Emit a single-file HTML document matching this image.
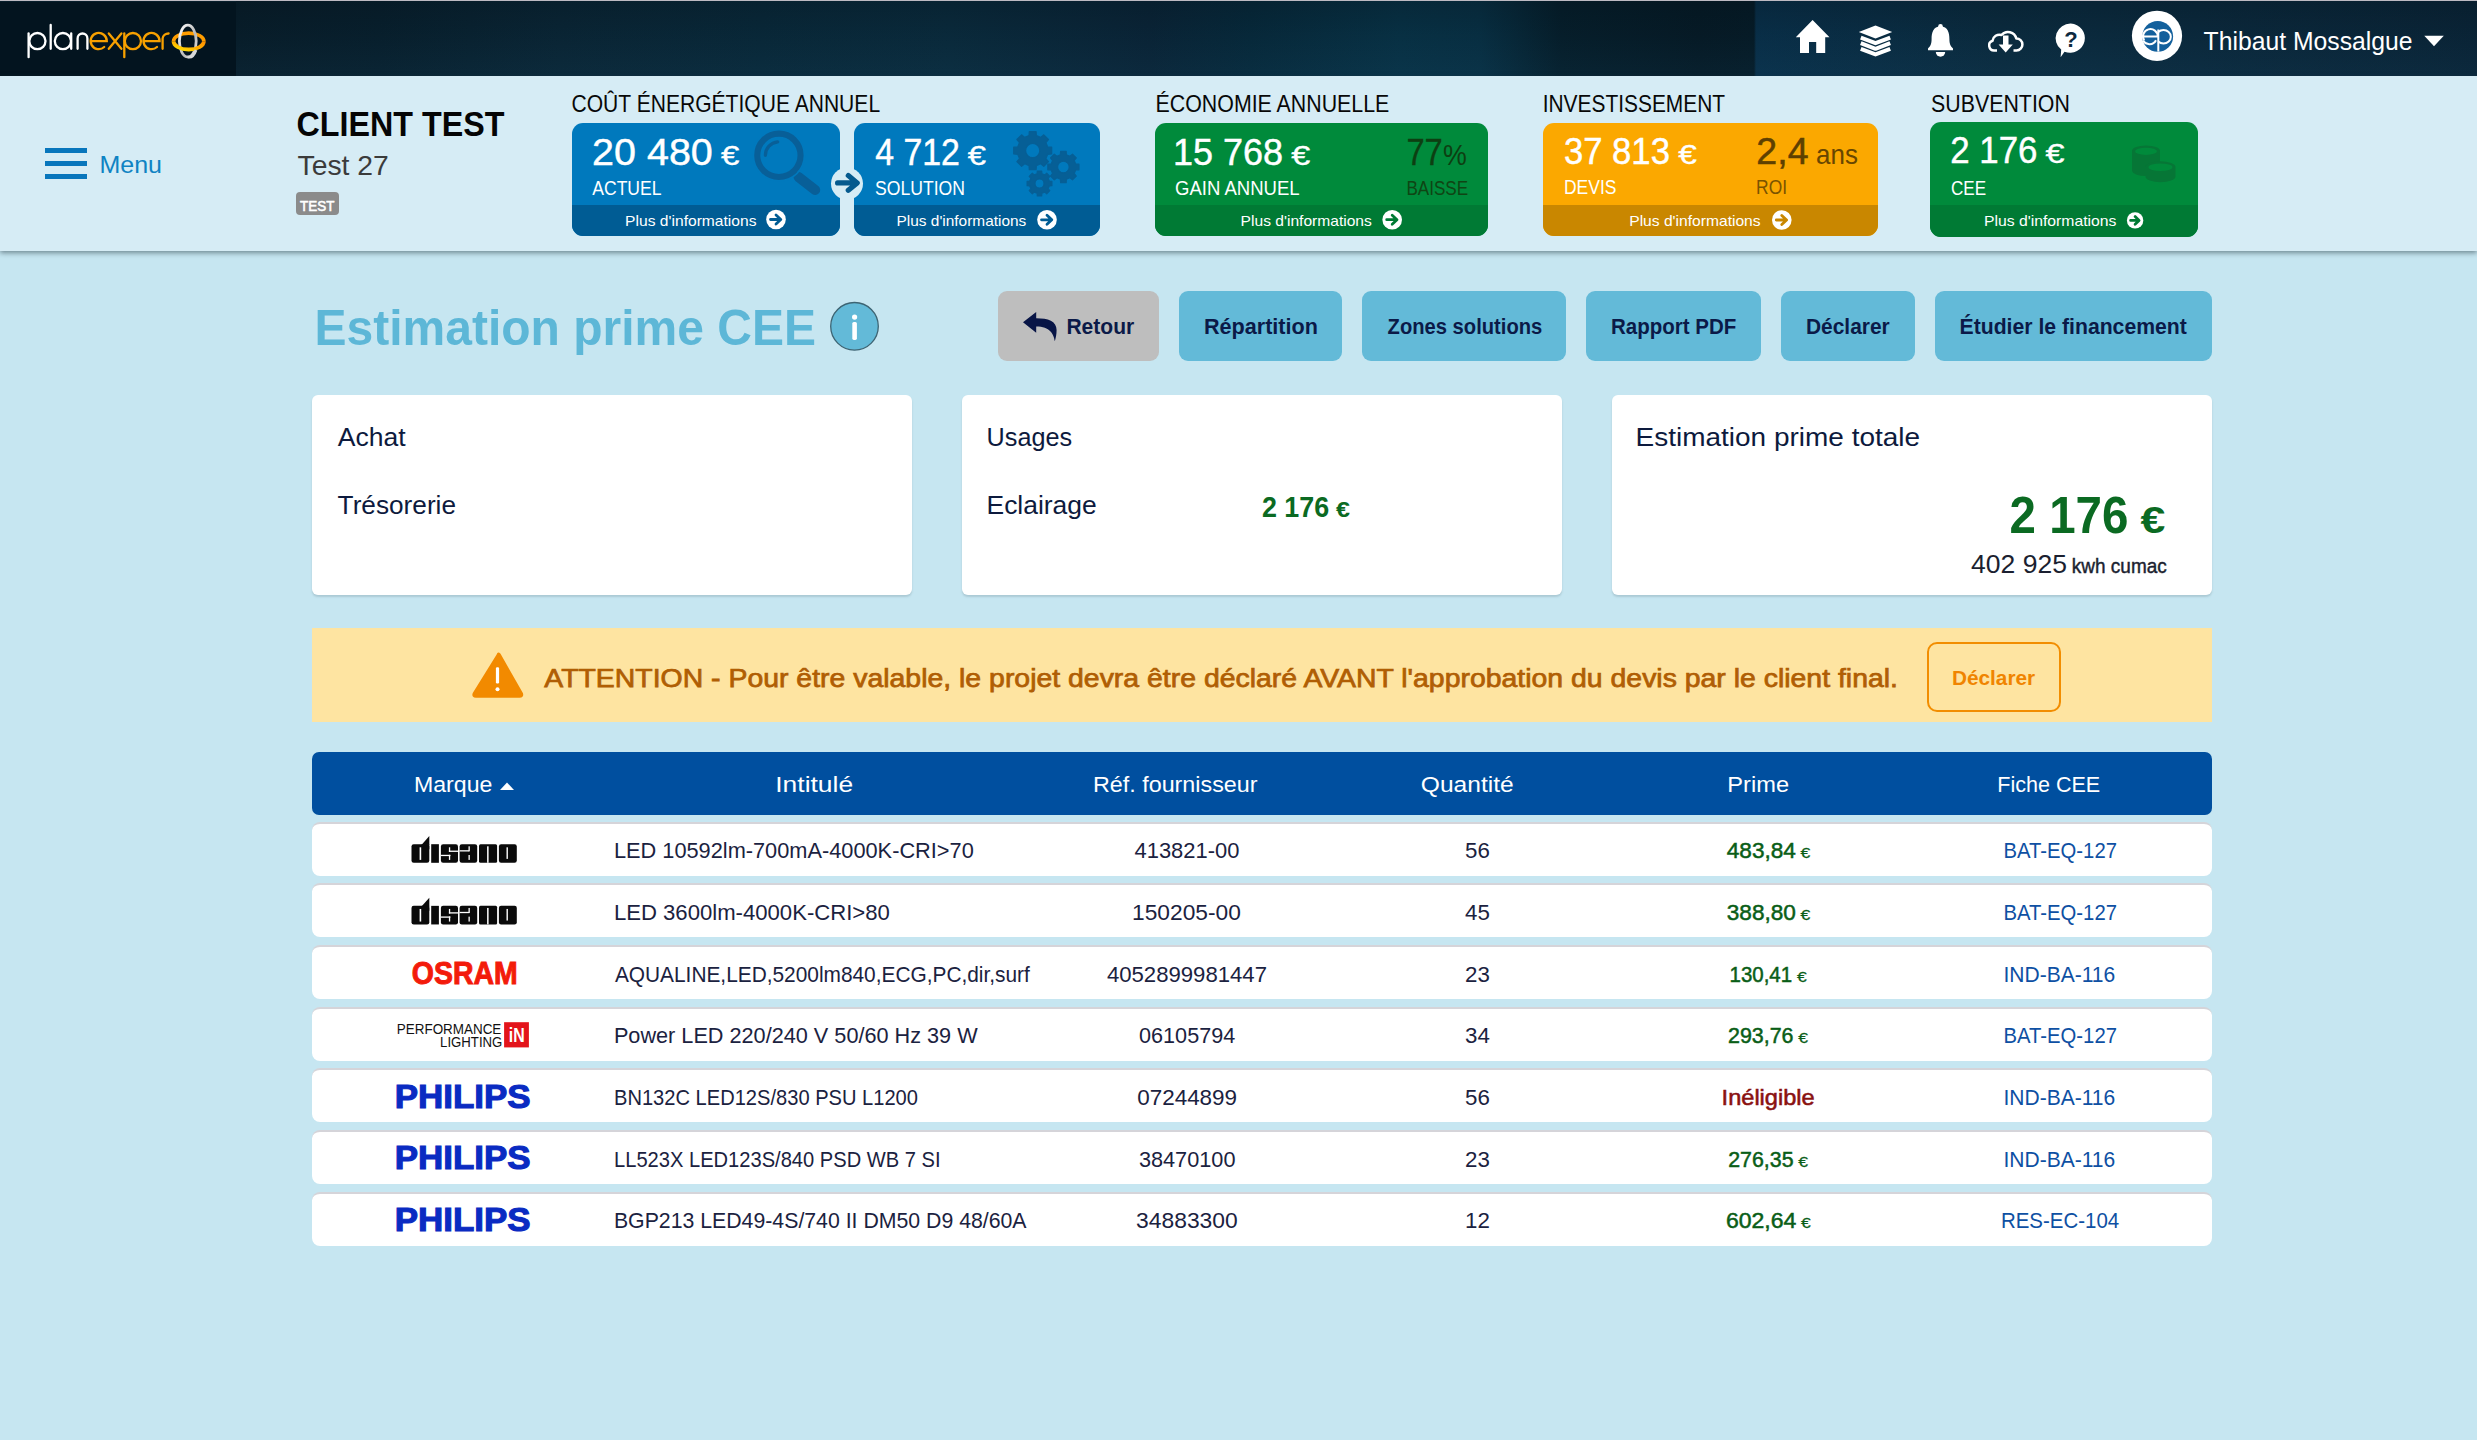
<!DOCTYPE html>
<html lang="fr">
<head>
<meta charset="utf-8">
<title>Estimation prime CEE</title>
<style>
*{box-sizing:border-box;margin:0;padding:0}
html,body{width:2477px;height:1440px;overflow:hidden}
body{background:#c6e6f1;font-family:"Liberation Sans",sans-serif;position:relative;color:#0d1a3d}
.abs{position:absolute}
.t{position:absolute;white-space:nowrap;line-height:1}
/* navbar */
#nav{position:absolute;left:0;top:0;width:2477px;height:76px;border-top:1px solid #bdbac2;
 background:linear-gradient(90deg,#081e2b 236px,#08202e 380px,#0a2636 560px,#09293a 760px,#0a2b3d 950px,#0a2538 1150px,#072a3c 1250px,#083246 1400px,#083044 1480px,#061f2c 1560px,#061b27 1700px,#061c28 1754px,#09304a 1756px,#0b2c40 2000px,#0b2a3e 2200px,#0a2538 2477px)}
#logo{position:absolute;left:0;top:1px;width:236px;height:75px;background:#03141f}
#hdr{position:absolute;left:0;top:76px;width:2477px;height:175px;background:#d6ecf5;box-shadow:0 2px 5px rgba(40,60,70,.55)}
.lbl{font-size:22px;color:#0a0a0a;letter-spacing:-0.4px}
.card{position:absolute;top:123px;height:113px;border-radius:11px;overflow:hidden}
.card .strip{position:absolute;left:0;right:0;bottom:0;height:31px}
.big{font-size:37px;color:#fff;letter-spacing:-0.5px}
.big small{font-size:27px}
.sub{font-size:18.5px;color:#fff;letter-spacing:-0.3px}
.more{font-size:15px;color:#fff;letter-spacing:-0.2px}
.btn{position:absolute;top:291px;height:70px;border-radius:9px;background:#63bad8;font-weight:bold;font-size:21px;color:#0b1a48;text-align:center;line-height:70px;letter-spacing:-0.2px}
.box{position:absolute;top:395px;width:600px;height:200px;background:#fff;border-radius:6px;box-shadow:0 2px 2px rgba(120,150,160,.35)}
.row{position:absolute;left:312px;width:1900px;height:54px;background:#fff;border-radius:7px;border-top:2px solid #d3d6d8}
.cell{position:absolute;top:15px;font-size:22px;color:#1b2240;white-space:nowrap;line-height:1;letter-spacing:-0.2px}
.c{transform:translateX(-50%)}
.prime{font-weight:bold;color:#0c6a23}
.prime small{font-size:15px}
.fiche{color:#1f5c9e}
</style>
</head>
<body>
<div id="nav">
  <div class="abs" style="left:236px;top:0;width:2241px;height:75px;background:linear-gradient(180deg,rgba(0,8,14,.22) 0%,rgba(0,8,14,.06) 45%,rgba(30,80,110,.10) 100%)"></div>
  <div id="logo"></div>
  <svg class="abs" style="left:0;top:-1px" width="2477" height="77" viewBox="0 0 2477 77">
    <defs>
      <linearGradient id="og" x1="0" y1="1" x2="1" y2="0">
        <stop offset="0" stop-color="#ffe600"/><stop offset=".45" stop-color="#ffb000"/><stop offset="1" stop-color="#ff9000"/>
      </linearGradient>
      <linearGradient id="sg" x1="0" y1="0" x2="1" y2="1">
        <stop offset="0" stop-color="#ffffff"/><stop offset=".6" stop-color="#b8b8b8"/><stop offset="1" stop-color="#e8e8e8"/>
      </linearGradient>
    </defs>
    <!-- logo text -->
    <g fill="none" stroke="#ffffff" stroke-width="2.3" stroke-linecap="round">
      <path d="M28.6,33.5 V57.2"/><circle cx="37.4" cy="41.1" r="8.1"/>
      <path d="M50.7,25 V48.8"/>
      <circle cx="62.9" cy="41.1" r="8.1"/><path d="M71.2,33.5 V48.8"/>
      <path d="M77.6,48.8 V38.4 A4.9,4.9 0 0 1 87.4,38.4 V48.8"/>
    </g>
    <g fill="none" stroke="#f7a000" stroke-width="2.3" stroke-linecap="round">
      <path d="M90.6,41.2 H106.8 A8.1,8.1 0 1 0 104.2,47"/>
      <path d="M108.8,33.5 L121.4,48.8 M121.4,33.5 L108.8,48.8"/>
      <path d="M124.3,33.5 V57.2"/><circle cx="132.9" cy="41.1" r="8.1"/>
      <path d="M143.4,41.2 H159.6 A8.1,8.1 0 1 0 157,47"/>
      <path d="M162.6,48.8 V38.5 A6,5.5 0 0 1 168.6,33.5"/>
    </g>
    <path d="M173.5,41.3 A15.2,8.2 0 0 1 203.9,41.3" fill="none" stroke="#ff9d00" stroke-width="3.6"/>
    <ellipse cx="187.8" cy="41.05" rx="8.4" ry="15.9" fill="none" stroke="url(#sg)" stroke-width="2.8"/>
    <path d="M203.9,41.3 A15.2,8.2 0 0 1 173.5,41.3" fill="none" stroke="url(#og)" stroke-width="3.8"/>
    <path d="M196,50 A8.4,15.9 0 0 1 187.8,57" fill="none" stroke="#d8d8d8" stroke-width="2.8"/>
    <!-- home -->
    <path d="M1812.6,20 L1829.5,37.2 L1825.2,37.2 L1825.2,53 L1816.2,53 L1816.2,42 L1809,42 L1809,53 L1800,53 L1800,37.2 L1795.8,37.2 Z" fill="#fff"/>
    <!-- layers -->
    <g fill="#fff">
      <path d="M1858.8,32 L1875.5,25.5 L1892.2,32 L1875.5,38.5 Z"/>
    </g>
    <g fill="none" stroke="#fff" stroke-width="4" stroke-linejoin="round">
      <path d="M1860.8,37.6 L1875.5,43.2 L1890.2,37.6"/>
      <path d="M1860.8,43.2 L1875.5,48.8 L1890.2,43.2"/>
      <path d="M1860.8,48.8 L1875.5,54.4 L1890.2,48.8"/>
    </g>
    <!-- bell -->
    <g fill="#fff">
      <circle cx="1940.5" cy="26.2" r="2.3"/>
      <path d="M1940.5,26.5 C1933,26.5 1931.6,33 1931.6,39 C1931.6,44 1930.5,46 1928,48.5 L1928,50.3 L1953,50.3 L1953,48.5 C1950.5,46 1949.4,44 1949.4,39 C1949.4,33 1948,26.5 1940.5,26.5 Z"/>
      <path d="M1935.8,52 A4.7,4.7 0 0 0 1945.2,52 Z"/>
    </g>
    <!-- cloud download -->
    <path d="M1997,50.5 H1994.5 A5,5 0 0 1 1992.5,40.8 A7,7 0 0 1 2001.5,35 A8.5,8.5 0 0 1 2016.3,38.5 A6,6 0 0 1 2016.5,50.5 H2013.5" fill="none" stroke="#fff" stroke-width="2.5" stroke-linejoin="round"/>
    <path d="M2003,35.5 H2008.5 V44.5 H2012.8 L2005.7,52.6 L1998.6,44.5 H2003 Z" fill="#fff"/>
    <!-- question -->
    <path d="M2070.8,23.6 A14.8,14.6 0 1 1 2064.5,51.7 L2060.6,57.2 L2061.2,49.6 A14.8,14.6 0 0 1 2070.8,23.6 Z" fill="#fff"/>
    <text x="2071" y="46.8" text-anchor="middle" font-family="Liberation Sans" font-weight="bold" font-size="22" fill="#0c2a40">?</text>
    <!-- avatar -->
    <circle cx="2157" cy="35.8" r="25.1" fill="#fff"/>
    <circle cx="2157.7" cy="36.4" r="15.4" fill="#13609c"/>
    <g fill="none" stroke="#fff" stroke-width="2">
      <path d="M2142.5,36.6 H2157.8 A7.4,7.4 0 1 0 2144.2,40.5"/>
      <path d="M2143.2,40.8 A7.4,7.4 0 0 0 2156,40.2"/>
      <path d="M2158.3,29.5 V51.6"/>
      <path d="M2158.3,32 A7.3,6.8 0 1 1 2158.3,41.5"/>
    </g>
    <path d="M2424.3,35.8 L2443.8,35.8 L2434,46.2 Z" fill="#fff"/>
  </svg>
  </div>
<div id="hdr"></div>
<!-- menu -->
<div class="abs" style="left:45px;top:148px;width:42px;height:5px;background:#0876bc"></div>
<div class="abs" style="left:45px;top:161px;width:42px;height:5px;background:#0876bc"></div>
<div class="abs" style="left:45px;top:174px;width:42px;height:5px;background:#0876bc"></div>
<div class="abs" style="left:296px;top:192px;width:43px;height:23px;background:#8b8b8b;border-radius:4px"></div>

<!-- KPI labels -->

<!-- card 1 -->
<div class="card" style="left:572px;width:268px;background:#0079bd">
  <div class="strip" style="background:#005c94"></div>
  <svg class="abs" style="left:0;top:0" width="268" height="113">
    <path d="M226.5,54 L243.2,67" stroke="#085f98" stroke-width="10" stroke-linecap="round"/>
    <circle cx="206.9" cy="32.3" r="25.6" fill="none" stroke="#0079bd" stroke-width="1.6"/>
    <circle cx="206.9" cy="32.3" r="21.65" fill="none" stroke="#085f98" stroke-width="6.1"/>
    <path d="M193.4,32.3 A13.5,13.5 0 0 1 205.7,18.85" fill="none" stroke="#085f98" stroke-width="3.3" stroke-linecap="round"/>
  </svg>
</div>

<!-- card 2 -->
<div class="card" style="left:854px;width:246px;background:#0079bd">
  <div class="strip" style="background:#005c94"></div>
  <svg class="abs" style="left:0;top:0" width="246" height="113" id="gears"><path fill-rule="evenodd" d="M193.7,23.9 L197.7,24.2 L197.7,31.0 L193.7,31.3 L191.9,35.6 L194.5,38.7 L189.8,43.4 L186.7,40.8 L182.4,42.6 L182.1,46.6 L175.3,46.6 L175.0,42.6 L170.7,40.8 L167.6,43.4 L162.9,38.7 L165.5,35.6 L163.7,31.3 L159.7,31.0 L159.7,24.2 L163.7,23.9 L165.5,19.6 L162.9,16.5 L167.6,11.8 L170.7,14.4 L175.0,12.6 L175.3,8.6 L182.1,8.6 L182.4,12.6 L186.7,14.4 L189.8,11.8 L194.5,16.5 L191.9,19.6 Z M185.8,27.6 A7.1,7.1 0 1 0 171.6,27.6 A7.1,7.1 0 1 0 185.8,27.6 Z" fill="#065f96" stroke="#065f96" stroke-width="1.2" stroke-linejoin="round"/><path fill-rule="evenodd" d="M221.7,41.0 L225.0,41.2 L225.0,46.8 L221.7,47.0 L220.2,50.5 L222.3,53.1 L218.5,56.9 L215.9,54.8 L212.4,56.3 L212.2,59.6 L206.6,59.6 L206.4,56.3 L202.9,54.8 L200.3,56.9 L196.5,53.1 L198.6,50.5 L197.1,47.0 L193.8,46.8 L193.8,41.2 L197.1,41.0 L198.6,37.5 L196.5,34.9 L200.3,31.1 L202.9,33.2 L206.4,31.7 L206.6,28.4 L212.2,28.4 L212.4,31.7 L215.9,33.2 L218.5,31.1 L222.3,34.9 L220.2,37.5 Z M215.2,44.0 A5.8,5.8 0 1 0 203.6,44.0 A5.8,5.8 0 1 0 215.2,44.0 Z" fill="#065f96" stroke="#065f96" stroke-width="1.2" stroke-linejoin="round"/><path fill-rule="evenodd" d="M195.3,58.1 L197.9,58.3 L197.9,62.7 L195.3,62.9 L194.1,65.7 L195.8,67.7 L192.7,70.8 L190.7,69.1 L187.9,70.3 L187.7,72.9 L183.3,72.9 L183.1,70.3 L180.3,69.1 L178.3,70.8 L175.2,67.7 L176.9,65.7 L175.7,62.9 L173.1,62.7 L173.1,58.3 L175.7,58.1 L176.9,55.3 L175.2,53.3 L178.3,50.2 L180.3,51.9 L183.1,50.7 L183.3,48.1 L187.7,48.1 L187.9,50.7 L190.7,51.9 L192.7,50.2 L195.8,53.3 L194.1,55.3 Z M190.0,60.5 A4.5,4.5 0 1 0 181.0,60.5 A4.5,4.5 0 1 0 190.0,60.5 Z" fill="#065f96" stroke="#065f96" stroke-width="1.2" stroke-linejoin="round"/></svg>
</div>
<!-- arrow circle -->
<svg class="abs" style="left:828px;top:166px" width="38" height="38">
  <circle cx="19" cy="17.6" r="16" fill="#d6ecf5"/>
  <path d="M9.6,16.9 H27.5 M20.3,9.6 L29.2,16.9 L20.3,24.3" fill="none" stroke="#055a8e" stroke-width="5.2" stroke-linecap="round" stroke-linejoin="round"/>
</svg>

<!-- card 3 -->
<div class="card" style="left:1155px;width:333px;background:#008a3b">
  <div class="strip" style="background:#007a34"></div>
</div>

<!-- card 4 -->
<div class="card" style="left:1543px;width:335px;background:#fba800">
  <div class="strip" style="background:#c98700"></div>
</div>

<!-- card 5 -->
<div class="card" style="left:1930px;top:122px;height:115px;width:268px;background:#008a3b">
  <div class="strip" style="background:#007a34;height:32px"></div>
  <svg class="abs" style="left:0;top:0" width="268" height="115" id="coins"><g fill="#067636">
<path d="M202,29 A14,5.5 0 0 1 230,29 V48.5 A14,5.5 0 0 1 202,48.5 Z"/>
<path d="M215.5,45 A15,5.8 0 0 1 245.5,45 V54.4 A15,5.8 0 0 1 215.5,54.4 Z"/>
</g>
<ellipse cx="216" cy="29.3" rx="11" ry="3.6" fill="#008a3b"/>
<ellipse cx="230.5" cy="45.2" rx="12" ry="3.8" fill="#008a3b"/>
<path d="M215.5,45 A15,5.8 0 0 0 230,51" fill="none" stroke="#077a36" stroke-width="0"/>
</svg>
</div>

<!-- more icons -->
<svg class="abs" style="left:0;top:200px" width="2477" height="40" viewBox="0 200 2477 40">
  <g id="moreicons"><circle cx="776" cy="219.5" r="9.8" fill="#fff"/><path d="M770.5,219.5 H780 M776,215.0 L780.8,219.5 L776,224.0" fill="none" stroke="#005c94" stroke-width="2.8" stroke-linecap="round" stroke-linejoin="round"/><circle cx="1047" cy="219.8" r="9.8" fill="#fff"/><path d="M1041.5,219.8 H1051 M1047,215.3 L1051.8,219.8 L1047,224.3" fill="none" stroke="#005c94" stroke-width="2.8" stroke-linecap="round" stroke-linejoin="round"/><circle cx="1392.2" cy="219.7" r="9.8" fill="#fff"/><path d="M1386.7,219.7 H1396.2 M1392.2,215.2 L1397.0,219.7 L1392.2,224.2" fill="none" stroke="#007a34" stroke-width="2.8" stroke-linecap="round" stroke-linejoin="round"/><circle cx="1781.8" cy="220" r="9.8" fill="#fff"/><path d="M1776.3,220 H1785.8 M1781.8,215.5 L1786.6,220 L1781.8,224.5" fill="none" stroke="#c98700" stroke-width="2.8" stroke-linecap="round" stroke-linejoin="round"/><circle cx="2135.1" cy="220.4" r="8.2" fill="#fff"/><path d="M2130.6,220.4 H2138.6 M2135.1,216.6 L2139.1,220.4 L2135.1,224.2" fill="none" stroke="#007a34" stroke-width="2.8" stroke-linecap="round" stroke-linejoin="round"/></g>
</svg>

<!-- title -->
<svg class="abs" style="left:828px;top:300px" width="54" height="54">
  <circle cx="26.5" cy="26.3" r="23.8" fill="#63bad8" stroke="#3d6473" stroke-width="1.3"/>
  <circle cx="26.6" cy="17.1" r="2.6" fill="#fff"/>
  <rect x="24.3" y="22" width="4.6" height="17.9" rx="1.6" fill="#fff"/>
</svg>

<!-- buttons -->
<div class="btn" style="left:998px;width:161px;background:#bebebe"></div>
<svg class="abs" style="left:1020px;top:309px" width="40" height="36">
  <path d="M3,13.2 L16.2,3 V9.2 C28,9.2 36.6,12 36.6,21 C36.6,25.5 35.8,29 34.8,32.2 C33.8,25 30,17.4 16.2,17.4 V23.8 Z" fill="#081546"/>
</svg>
<div class="btn" style="left:1179px;width:163px"></div>
<div class="btn" style="left:1362px;width:204px"></div>
<div class="btn" style="left:1586px;width:175px"></div>
<div class="btn" style="left:1781px;width:134px"></div>
<div class="btn" style="left:1935px;width:277px"></div>

<!-- boxes -->
<div class="box" style="left:312px"></div>
<div class="box" style="left:962px"></div>
<div class="box" style="left:1612px"></div>

<!-- alert -->
<div class="abs" style="left:312px;top:628px;width:1900px;height:94px;background:#fee4a1"></div>
<svg class="abs" style="left:468px;top:648px" width="60" height="54">
  <path d="M29.8,6.5 Q30,4.5 31.8,6.5 L54,45.5 Q55,48.7 51.5,48.7 L8,48.7 Q4.5,48.7 5.6,45.5 Z" fill="#f28a00" stroke="#f28a00" stroke-width="2" stroke-linejoin="round"/>
  <rect x="27.9" y="19.2" width="3.2" height="16.3" rx="1.2" fill="#fff"/>
  <circle cx="29.5" cy="41.2" r="2" fill="#fff"/>
</svg>
<div class="abs" style="left:1927px;top:642px;width:134px;height:70px;border:2px solid #f28d00;border-radius:10px"></div>

<!-- table header -->
<div class="abs" style="left:312px;top:752px;width:1900px;height:63px;background:#004f9f;border-radius:7px"></div>
<svg class="abs" style="left:498px;top:780px" width="18" height="12"><path d="M2,10 L9,2.5 L16,10 Z" fill="#fff"/></svg>

<div class="abs" style="left:312px;top:821.80px;width:1900px;height:54px;background:#fff;border-radius:8px;border-top:2px solid #d5d4d9"></div>
<div class="abs" style="left:312px;top:883.45px;width:1900px;height:54px;background:#fff;border-radius:8px;border-top:2px solid #d5d4d9"></div>
<div class="abs" style="left:312px;top:945.10px;width:1900px;height:54px;background:#fff;border-radius:8px;border-top:2px solid #d5d4d9"></div>
<div class="abs" style="left:312px;top:1006.75px;width:1900px;height:54px;background:#fff;border-radius:8px;border-top:2px solid #d5d4d9"></div>
<div class="abs" style="left:312px;top:1068.40px;width:1900px;height:54px;background:#fff;border-radius:8px;border-top:2px solid #d5d4d9"></div>
<div class="abs" style="left:312px;top:1130.05px;width:1900px;height:54px;background:#fff;border-radius:8px;border-top:2px solid #d5d4d9"></div>
<div class="abs" style="left:312px;top:1191.70px;width:1900px;height:54px;background:#fff;border-radius:8px;border-top:2px solid #d5d4d9"></div>
<svg class="abs" style="left:0;top:0" width="2477" height="1440"><rect x="411.50" y="844.20" width="17.80" height="18.60" rx="2.2" fill="#0a0a0a"/><rect x="421.70" y="844.20" width="7.60" height="5.00" rx="0" fill="#0a0a0a"/><path d="M421.70,844.70 L429.30,836.00 L429.30,844.70 Z" fill="#0a0a0a"/><rect x="431.20" y="844.20" width="7.70" height="18.60" rx="0" fill="#0a0a0a"/><rect x="440.90" y="844.20" width="17.10" height="18.60" rx="2.2" fill="#0a0a0a"/><rect x="459.60" y="844.20" width="17.60" height="18.60" rx="2.2" fill="#0a0a0a"/><rect x="479.00" y="844.20" width="18.10" height="18.60" rx="1.5" fill="#0a0a0a"/><rect x="498.90" y="844.20" width="17.90" height="18.60" rx="2.2" fill="#0a0a0a"/><rect x="419.60" y="847.30" width="1.60" height="12.60" rx="0" fill="#ffffff"/><rect x="448.90" y="847.30" width="1.30" height="4.60" rx="0" fill="#ffffff"/><rect x="448.90" y="850.60" width="9.10" height="1.30" rx="0" fill="#ffffff"/><rect x="440.70" y="854.80" width="9.70" height="1.30" rx="0" fill="#ffffff"/><rect x="448.90" y="854.80" width="1.30" height="5.10" rx="0" fill="#ffffff"/><rect x="459.60" y="850.20" width="9.70" height="1.30" rx="0" fill="#ffffff"/><rect x="468.50" y="846.30" width="1.30" height="5.00" rx="0" fill="#ffffff"/><rect x="468.50" y="855.00" width="1.30" height="4.90" rx="0" fill="#ffffff"/><rect x="487.10" y="846.30" width="1.50" height="16.50" rx="0" fill="#ffffff"/><rect x="506.50" y="847.30" width="1.40" height="11.60" rx="0" fill="#ffffff"/><rect x="411.50" y="905.85" width="17.80" height="18.60" rx="2.2" fill="#0a0a0a"/><rect x="421.70" y="905.85" width="7.60" height="5.00" rx="0" fill="#0a0a0a"/><path d="M421.70,906.35 L429.30,897.65 L429.30,906.35 Z" fill="#0a0a0a"/><rect x="431.20" y="905.85" width="7.70" height="18.60" rx="0" fill="#0a0a0a"/><rect x="440.90" y="905.85" width="17.10" height="18.60" rx="2.2" fill="#0a0a0a"/><rect x="459.60" y="905.85" width="17.60" height="18.60" rx="2.2" fill="#0a0a0a"/><rect x="479.00" y="905.85" width="18.10" height="18.60" rx="1.5" fill="#0a0a0a"/><rect x="498.90" y="905.85" width="17.90" height="18.60" rx="2.2" fill="#0a0a0a"/><rect x="419.60" y="908.95" width="1.60" height="12.60" rx="0" fill="#ffffff"/><rect x="448.90" y="908.95" width="1.30" height="4.60" rx="0" fill="#ffffff"/><rect x="448.90" y="912.25" width="9.10" height="1.30" rx="0" fill="#ffffff"/><rect x="440.70" y="916.45" width="9.70" height="1.30" rx="0" fill="#ffffff"/><rect x="448.90" y="916.45" width="1.30" height="5.10" rx="0" fill="#ffffff"/><rect x="459.60" y="911.85" width="9.70" height="1.30" rx="0" fill="#ffffff"/><rect x="468.50" y="907.95" width="1.30" height="5.00" rx="0" fill="#ffffff"/><rect x="468.50" y="916.65" width="1.30" height="4.90" rx="0" fill="#ffffff"/><rect x="487.10" y="907.95" width="1.50" height="16.50" rx="0" fill="#ffffff"/><rect x="506.50" y="908.95" width="1.40" height="11.60" rx="0" fill="#ffffff"/><rect x="504.1" y="1022.2" width="24.8" height="25.2" fill="#e3141b"/></svg>
<svg class="abs" style="left:0;top:0;font-family:'Liberation Sans'" width="2477" height="1440" xml:space="preserve">
<text x="2203.60" y="50" font-size="24.9" font-weight="normal" fill="#ffffff" textLength="209.04" lengthAdjust="spacingAndGlyphs">Thibaut Mossalgue</text>
<text x="99.48" y="172.9" font-size="24.8" font-weight="normal" fill="#0f83c3" textLength="62.51" lengthAdjust="spacingAndGlyphs">Menu</text>
<text x="296.56" y="136" font-size="34.5" font-weight="bold" fill="#050505" textLength="207.90" lengthAdjust="spacingAndGlyphs">CLIENT TEST</text>
<text x="297.50" y="174.8" font-size="27.8" font-weight="normal" fill="#3b3b3b" textLength="91.27" lengthAdjust="spacingAndGlyphs">Test 27</text>
<text x="300.10" y="211.3" font-size="14.6" font-weight="normal" fill="#ffffff" textLength="34.22" lengthAdjust="spacingAndGlyphs" stroke="#ffffff" stroke-width="0.6">TEST</text>
<text x="571.51" y="112.1" font-size="23.6" font-weight="normal" fill="#080808" textLength="308.60" lengthAdjust="spacingAndGlyphs">COÛT ÉNERGÉTIQUE ANNUEL</text>
<text x="1155.60" y="112.2" font-size="23.6" font-weight="normal" fill="#080808" textLength="233.76" lengthAdjust="spacingAndGlyphs">ÉCONOMIE ANNUELLE</text>
<text x="1542.73" y="112.4" font-size="23.6" font-weight="normal" fill="#080808" textLength="182.34" lengthAdjust="spacingAndGlyphs">INVESTISSEMENT</text>
<text x="1931.10" y="112.1" font-size="23.6" font-weight="normal" fill="#080808" textLength="138.74" lengthAdjust="spacingAndGlyphs">SUBVENTION</text>
<text x="592.11" y="165" font-size="36.3" font-weight="normal" fill="#ffffff" textLength="120.68" lengthAdjust="spacingAndGlyphs" stroke="#ffffff" stroke-width="0.45">20 480</text>
<text x="721.00" y="165" font-size="27.5" font-weight="normal" fill="#ffffff" textLength="18.35" lengthAdjust="spacingAndGlyphs" stroke="#ffffff" stroke-width="0.35">€</text>
<text x="875.20" y="164.8" font-size="36.3" font-weight="normal" fill="#ffffff" textLength="84.71" lengthAdjust="spacingAndGlyphs" stroke="#ffffff" stroke-width="0.45">4 712</text>
<text x="967.80" y="164.8" font-size="27.5" font-weight="normal" fill="#ffffff" textLength="18.25" lengthAdjust="spacingAndGlyphs" stroke="#ffffff" stroke-width="0.35">€</text>
<text x="1173.02" y="164.5" font-size="36.3" font-weight="normal" fill="#ffffff" textLength="110.06" lengthAdjust="spacingAndGlyphs" stroke="#ffffff" stroke-width="0.45">15 768</text>
<text x="1291.20" y="164.5" font-size="27.5" font-weight="normal" fill="#ffffff" textLength="18.96" lengthAdjust="spacingAndGlyphs" stroke="#ffffff" stroke-width="0.35">€</text>
<text x="1406.40" y="164.5" font-size="36.3" font-weight="normal" fill="#0d3f12" textLength="36.37" lengthAdjust="spacingAndGlyphs" stroke="#0d3f12" stroke-width="0.3">77</text>
<text x="1442.97" y="164.6" font-size="28.8" font-weight="normal" fill="#0d3f12" textLength="23.79" lengthAdjust="spacingAndGlyphs">%</text>
<text x="1563.95" y="163.8" font-size="36.3" font-weight="normal" fill="#ffffff" textLength="105.99" lengthAdjust="spacingAndGlyphs" stroke="#ffffff" stroke-width="0.45">37 813</text>
<text x="1678.20" y="163.8" font-size="27.5" font-weight="normal" fill="#ffffff" textLength="18.56" lengthAdjust="spacingAndGlyphs" stroke="#ffffff" stroke-width="0.35">€</text>
<text x="1756.37" y="164.2" font-size="36.3" font-weight="normal" fill="#5e4000" textLength="52.13" lengthAdjust="spacingAndGlyphs" stroke="#5e4000" stroke-width="0.5">2,4</text>
<text x="1816.09" y="164.2" font-size="28.5" font-weight="normal" fill="#684600" textLength="41.84" lengthAdjust="spacingAndGlyphs">ans</text>
<text x="1950.24" y="163.2" font-size="36.3" font-weight="normal" fill="#ffffff" textLength="87.20" lengthAdjust="spacingAndGlyphs" stroke="#ffffff" stroke-width="0.45">2 176</text>
<text x="2045.60" y="163.2" font-size="27.5" font-weight="normal" fill="#ffffff" textLength="18.96" lengthAdjust="spacingAndGlyphs" stroke="#ffffff" stroke-width="0.35">€</text>
<text x="592.30" y="194.9" font-size="19.4" font-weight="normal" fill="#ffffff" textLength="69.20" lengthAdjust="spacingAndGlyphs">ACTUEL</text>
<text x="875.00" y="194.9" font-size="19.4" font-weight="normal" fill="#ffffff" textLength="89.91" lengthAdjust="spacingAndGlyphs">SOLUTION</text>
<text x="1175.00" y="194.8" font-size="19.4" font-weight="normal" fill="#ffffff" textLength="124.60" lengthAdjust="spacingAndGlyphs">GAIN ANNUEL</text>
<text x="1406.42" y="194.8" font-size="19.4" font-weight="normal" fill="#0f4514" textLength="61.72" lengthAdjust="spacingAndGlyphs">BAISSE</text>
<text x="1564.00" y="194.4" font-size="19.4" font-weight="normal" fill="#ffffff" textLength="52.44" lengthAdjust="spacingAndGlyphs">DEVIS</text>
<text x="1756.10" y="194.4" font-size="19.4" font-weight="normal" fill="#7a5300" textLength="30.94" lengthAdjust="spacingAndGlyphs">ROI</text>
<text x="1951.00" y="194.8" font-size="19.4" font-weight="normal" fill="#ffffff" textLength="35.14" lengthAdjust="spacingAndGlyphs">CEE</text>
<text x="625.13" y="226" font-size="14.6" font-weight="normal" fill="#ffffff" textLength="131.39" lengthAdjust="spacingAndGlyphs">Plus d&#x27;informations</text>
<text x="896.54" y="226" font-size="14.6" font-weight="normal" fill="#ffffff" textLength="129.77" lengthAdjust="spacingAndGlyphs">Plus d&#x27;informations</text>
<text x="1240.63" y="226" font-size="14.6" font-weight="normal" fill="#ffffff" textLength="131.19" lengthAdjust="spacingAndGlyphs">Plus d&#x27;informations</text>
<text x="1629.23" y="226.2" font-size="14.6" font-weight="normal" fill="#ffffff" textLength="131.39" lengthAdjust="spacingAndGlyphs">Plus d&#x27;informations</text>
<text x="1983.92" y="226.3" font-size="14.6" font-weight="normal" fill="#ffffff" textLength="132.60" lengthAdjust="spacingAndGlyphs">Plus d&#x27;informations</text>
<text x="314.48" y="344.5" font-size="49.3" font-weight="bold" fill="#5db7d7" textLength="501.55" lengthAdjust="spacingAndGlyphs">Estimation prime CEE</text>
<text x="1066.41" y="334" font-size="21.2" font-weight="bold" fill="#0b1a48" textLength="67.84" lengthAdjust="spacingAndGlyphs">Retour</text>
<text x="1203.88" y="334" font-size="21.2" font-weight="bold" fill="#0b1a48" textLength="114.08" lengthAdjust="spacingAndGlyphs">Répartition</text>
<text x="1387.60" y="334" font-size="21.2" font-weight="bold" fill="#0b1a48" textLength="154.65" lengthAdjust="spacingAndGlyphs">Zones solutions</text>
<text x="1611.03" y="334" font-size="21.2" font-weight="bold" fill="#0b1a48" textLength="125.31" lengthAdjust="spacingAndGlyphs">Rapport PDF</text>
<text x="1806.01" y="334" font-size="21.2" font-weight="bold" fill="#0b1a48" textLength="83.73" lengthAdjust="spacingAndGlyphs">Déclarer</text>
<text x="1959.50" y="334" font-size="21.2" font-weight="bold" fill="#0b1a48" textLength="227.36" lengthAdjust="spacingAndGlyphs">Étudier le financement</text>
<text x="337.70" y="446.2" font-size="26.5" font-weight="normal" fill="#0d1a3d" textLength="67.86" lengthAdjust="spacingAndGlyphs">Achat</text>
<text x="337.60" y="514.3" font-size="26.5" font-weight="normal" fill="#0d1a3d" textLength="118.43" lengthAdjust="spacingAndGlyphs">Trésorerie</text>
<text x="986.60" y="446.2" font-size="26.5" font-weight="normal" fill="#0d1a3d" textLength="85.44" lengthAdjust="spacingAndGlyphs">Usages</text>
<text x="986.50" y="514.3" font-size="26.5" font-weight="normal" fill="#0d1a3d" textLength="110.23" lengthAdjust="spacingAndGlyphs">Eclairage</text>
<text x="1261.89" y="516.9" font-size="29.6" font-weight="bold" fill="#0b6a22" textLength="67.22" lengthAdjust="spacingAndGlyphs">2 176</text>
<text x="1336.00" y="516.9" font-size="22.5" font-weight="bold" fill="#0b6a22" textLength="13.96" lengthAdjust="spacingAndGlyphs">€</text>
<text x="1635.56" y="446" font-size="26.2" font-weight="normal" fill="#0d1a3d" textLength="284.54" lengthAdjust="spacingAndGlyphs">Estimation prime totale</text>
<text x="2009.59" y="533.2" font-size="52.3" font-weight="bold" fill="#0b6a22" textLength="118.89" lengthAdjust="spacingAndGlyphs">2 176</text>
<text x="2140.50" y="533" font-size="36" font-weight="bold" fill="#0b6a22" textLength="24.83" lengthAdjust="spacingAndGlyphs">€</text>
<text x="1971.10" y="572.9" font-size="25.8" font-weight="normal" fill="#1b1f30" textLength="95.86" lengthAdjust="spacingAndGlyphs">402 925</text>
<text x="2071.87" y="572.9" font-size="20.5" font-weight="normal" fill="#1b1f30" textLength="94.86" lengthAdjust="spacingAndGlyphs" stroke="#1b1f30" stroke-width="0.45">kwh cumac</text>
<text x="544.30" y="686.9" font-size="26.3" font-weight="normal" fill="#b05e04" textLength="1353.69" lengthAdjust="spacingAndGlyphs" stroke="#b05e04" stroke-width="0.75">ATTENTION - Pour être valable, le projet devra être déclaré AVANT l&#x27;approbation du devis par le client final.</text>
<text x="1951.91" y="684.9" font-size="21" font-weight="bold" fill="#f08400" textLength="83.26" lengthAdjust="spacingAndGlyphs">Déclarer</text>
<text x="413.98" y="792" font-size="22.7" font-weight="normal" fill="#ffffff" textLength="78.45" lengthAdjust="spacingAndGlyphs">Marque</text>
<text x="775.27" y="792" font-size="22.7" font-weight="normal" fill="#ffffff" textLength="77.85" lengthAdjust="spacingAndGlyphs">Intitulé</text>
<text x="1092.97" y="792" font-size="22.7" font-weight="normal" fill="#ffffff" textLength="164.57" lengthAdjust="spacingAndGlyphs">Réf. fournisseur</text>
<text x="1420.82" y="792" font-size="22.7" font-weight="normal" fill="#ffffff" textLength="92.85" lengthAdjust="spacingAndGlyphs">Quantité</text>
<text x="1727.36" y="792" font-size="22.7" font-weight="normal" fill="#ffffff" textLength="61.68" lengthAdjust="spacingAndGlyphs">Prime</text>
<text x="1997.25" y="792" font-size="22.7" font-weight="normal" fill="#ffffff" textLength="102.98" lengthAdjust="spacingAndGlyphs">Fiche CEE</text>
<text x="613.92" y="858.4" font-size="22.3" font-weight="normal" fill="#1b2240" textLength="359.87" lengthAdjust="spacingAndGlyphs">LED 10592lm-700mA-4000K-CRI&gt;70</text>
<text x="1134.50" y="858.4" font-size="22.3" font-weight="normal" fill="#1b2240" textLength="104.89" lengthAdjust="spacingAndGlyphs">413821-00</text>
<text x="1477.5" y="858.4" text-anchor="middle" font-size="22.3" font-weight="normal" fill="#1b2240">56</text>
<text x="1726.80" y="858.4" font-size="22" font-weight="normal" fill="#0a5e17" textLength="69.04" lengthAdjust="spacingAndGlyphs" stroke="#0a5e17" stroke-width="0.5">483,84</text>
<text x="1800.60" y="858.4" font-size="15.2" font-weight="normal" fill="#0a5e17" textLength="9.76" lengthAdjust="spacingAndGlyphs" stroke="#0a5e17" stroke-width="0.3">€</text>
<text x="2003.49" y="858.4" font-size="22.3" font-weight="normal" fill="#0e50a3" textLength="113.47" lengthAdjust="spacingAndGlyphs">BAT-EQ-127</text>
<text x="613.91" y="920.05" font-size="22.3" font-weight="normal" fill="#1b2240" textLength="275.99" lengthAdjust="spacingAndGlyphs">LED 3600lm-4000K-CRI&gt;80</text>
<text x="1132.08" y="920.05" font-size="22.3" font-weight="normal" fill="#1b2240" textLength="108.73" lengthAdjust="spacingAndGlyphs">150205-00</text>
<text x="1477.5" y="920.05" text-anchor="middle" font-size="22.3" font-weight="normal" fill="#1b2240">45</text>
<text x="1726.80" y="920.05" font-size="22" font-weight="normal" fill="#0a5e17" textLength="69.04" lengthAdjust="spacingAndGlyphs" stroke="#0a5e17" stroke-width="0.5">388,80</text>
<text x="1800.60" y="920.05" font-size="15.2" font-weight="normal" fill="#0a5e17" textLength="9.76" lengthAdjust="spacingAndGlyphs" stroke="#0a5e17" stroke-width="0.3">€</text>
<text x="2003.49" y="920.05" font-size="22.3" font-weight="normal" fill="#0e50a3" textLength="113.47" lengthAdjust="spacingAndGlyphs">BAT-EQ-127</text>
<text x="614.90" y="981.6999999999999" font-size="22.3" font-weight="normal" fill="#1b2240" textLength="414.95" lengthAdjust="spacingAndGlyphs">AQUALINE,LED,5200lm840,ECG,PC,dir,surf</text>
<text x="1106.90" y="981.6999999999999" font-size="22.3" font-weight="normal" fill="#1b2240" textLength="160.10" lengthAdjust="spacingAndGlyphs">4052899981447</text>
<text x="1477.5" y="981.6999999999999" text-anchor="middle" font-size="22.3" font-weight="normal" fill="#1b2240">23</text>
<text x="1729.57" y="981.6999999999999" font-size="22" font-weight="normal" fill="#0a5e17" textLength="62.55" lengthAdjust="spacingAndGlyphs" stroke="#0a5e17" stroke-width="0.5">130,41</text>
<text x="1796.90" y="981.6999999999999" font-size="15.2" font-weight="normal" fill="#0a5e17" textLength="9.76" lengthAdjust="spacingAndGlyphs" stroke="#0a5e17" stroke-width="0.3">€</text>
<text x="2003.41" y="981.6999999999999" font-size="22.3" font-weight="normal" fill="#0e50a3" textLength="111.87" lengthAdjust="spacingAndGlyphs">IND-BA-116</text>
<text x="613.93" y="1043.35" font-size="22.3" font-weight="normal" fill="#1b2240" textLength="363.72" lengthAdjust="spacingAndGlyphs">Power LED 220/240 V 50/60 Hz 39 W</text>
<text x="1139.10" y="1043.35" font-size="22.3" font-weight="normal" fill="#1b2240" textLength="96.09" lengthAdjust="spacingAndGlyphs">06105794</text>
<text x="1477.5" y="1043.35" text-anchor="middle" font-size="22.3" font-weight="normal" fill="#1b2240">34</text>
<text x="1728.03" y="1043.35" font-size="22" font-weight="normal" fill="#0a5e17" textLength="65.50" lengthAdjust="spacingAndGlyphs" stroke="#0a5e17" stroke-width="0.5">293,76</text>
<text x="1798.30" y="1043.35" font-size="15.2" font-weight="normal" fill="#0a5e17" textLength="9.76" lengthAdjust="spacingAndGlyphs" stroke="#0a5e17" stroke-width="0.3">€</text>
<text x="2003.49" y="1043.35" font-size="22.3" font-weight="normal" fill="#0e50a3" textLength="113.47" lengthAdjust="spacingAndGlyphs">BAT-EQ-127</text>
<text x="614.00" y="1105.0" font-size="22.3" font-weight="normal" fill="#1b2240" textLength="303.96" lengthAdjust="spacingAndGlyphs">BN132C LED12S/830 PSU L1200</text>
<text x="1137.20" y="1105.0" font-size="22.3" font-weight="normal" fill="#1b2240" textLength="99.90" lengthAdjust="spacingAndGlyphs">07244899</text>
<text x="1477.5" y="1105.0" text-anchor="middle" font-size="22.3" font-weight="normal" fill="#1b2240">56</text>
<text x="1721.58" y="1105.0" font-size="22.3" font-weight="normal" fill="#8a1111" textLength="93.14" lengthAdjust="spacingAndGlyphs" stroke="#8a1111" stroke-width="0.55">Inéligible</text>
<text x="2003.41" y="1105.0" font-size="22.3" font-weight="normal" fill="#0e50a3" textLength="111.87" lengthAdjust="spacingAndGlyphs">IND-BA-116</text>
<text x="614.00" y="1166.65" font-size="22.3" font-weight="normal" fill="#1b2240" textLength="326.58" lengthAdjust="spacingAndGlyphs">LL523X LED123S/840 PSD WB 7 SI</text>
<text x="1138.90" y="1166.65" font-size="22.3" font-weight="normal" fill="#1b2240" textLength="96.59" lengthAdjust="spacingAndGlyphs">38470100</text>
<text x="1477.5" y="1166.65" text-anchor="middle" font-size="22.3" font-weight="normal" fill="#1b2240">23</text>
<text x="1728.23" y="1166.65" font-size="22" font-weight="normal" fill="#0a5e17" textLength="65.30" lengthAdjust="spacingAndGlyphs" stroke="#0a5e17" stroke-width="0.5">276,35</text>
<text x="1798.30" y="1166.65" font-size="15.2" font-weight="normal" fill="#0a5e17" textLength="9.76" lengthAdjust="spacingAndGlyphs" stroke="#0a5e17" stroke-width="0.3">€</text>
<text x="2003.41" y="1166.65" font-size="22.3" font-weight="normal" fill="#0e50a3" textLength="111.87" lengthAdjust="spacingAndGlyphs">IND-BA-116</text>
<text x="613.95" y="1228.3" font-size="22.3" font-weight="normal" fill="#1b2240" textLength="412.63" lengthAdjust="spacingAndGlyphs">BGP213 LED49-4S/740 II DM50 D9 48/60A</text>
<text x="1136.10" y="1228.3" font-size="22.3" font-weight="normal" fill="#1b2240" textLength="101.61" lengthAdjust="spacingAndGlyphs">34883300</text>
<text x="1477.5" y="1228.3" text-anchor="middle" font-size="22.3" font-weight="normal" fill="#1b2240">12</text>
<text x="1725.95" y="1228.3" font-size="22" font-weight="normal" fill="#0a5e17" textLength="70.39" lengthAdjust="spacingAndGlyphs" stroke="#0a5e17" stroke-width="0.5">602,64</text>
<text x="1801.10" y="1228.3" font-size="15.2" font-weight="normal" fill="#0a5e17" textLength="9.76" lengthAdjust="spacingAndGlyphs" stroke="#0a5e17" stroke-width="0.3">€</text>
<text x="2000.98" y="1228.3" font-size="22.3" font-weight="normal" fill="#0e50a3" textLength="118.18" lengthAdjust="spacingAndGlyphs">RES-EC-104</text>
<text x="411.81" y="984.2" font-size="31.8" font-weight="bold" fill="#f31b0b" textLength="105.93" lengthAdjust="spacingAndGlyphs" stroke="#f31b0b" stroke-width="1.0">OSRAM</text>
<text x="396.82" y="1033.5" font-size="15.2" font-weight="normal" fill="#111111" textLength="104.50" lengthAdjust="spacingAndGlyphs">PERFORMANCE</text>
<text x="440.11" y="1047" font-size="14.8" font-weight="normal" fill="#111111" textLength="62.24" lengthAdjust="spacingAndGlyphs">LIGHTING</text>
<text x="508.78" y="1041.9" font-size="19.5" font-weight="bold" fill="#ffffff" textLength="15.90" lengthAdjust="spacingAndGlyphs">iN</text>
<text x="394.65" y="1107.5" font-size="32.6" font-weight="bold" fill="#0a2bc2" textLength="135.93" lengthAdjust="spacingAndGlyphs" stroke="#0a2bc2" stroke-width="1.1">PHILIPS</text>
<text x="394.65" y="1169.15" font-size="32.6" font-weight="bold" fill="#0a2bc2" textLength="135.93" lengthAdjust="spacingAndGlyphs" stroke="#0a2bc2" stroke-width="1.1">PHILIPS</text>
<text x="394.65" y="1230.8" font-size="32.6" font-weight="bold" fill="#0a2bc2" textLength="135.93" lengthAdjust="spacingAndGlyphs" stroke="#0a2bc2" stroke-width="1.1">PHILIPS</text>
</svg>
</body>
</html>
